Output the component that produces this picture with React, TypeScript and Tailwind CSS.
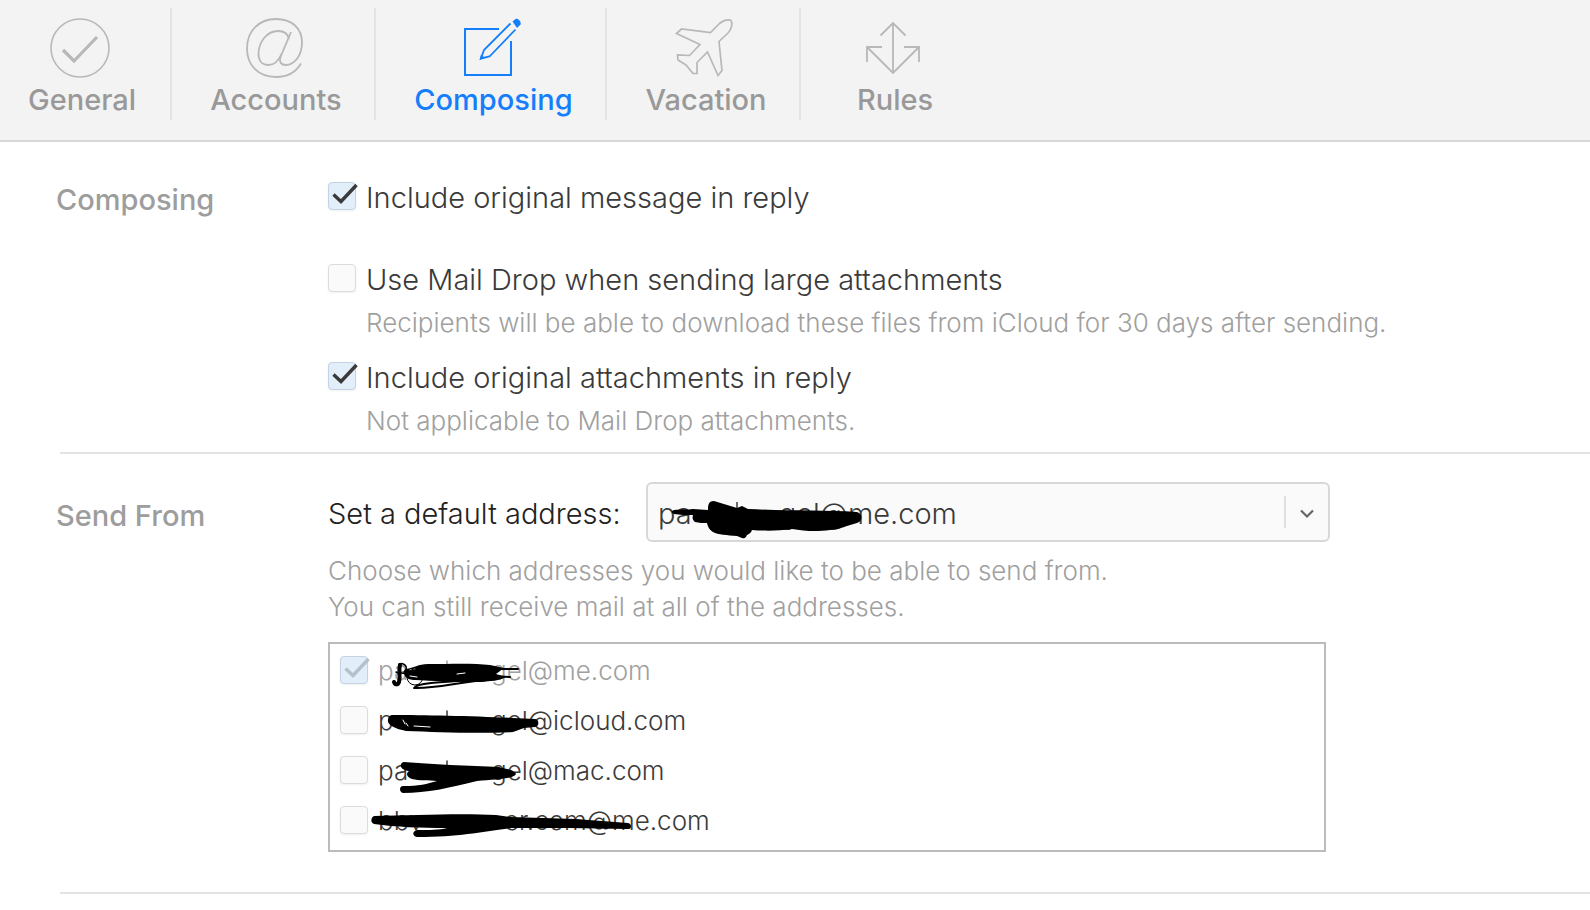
import React from 'react';

// Interfaces
interface Tab {
  id: string;
  label: string;
  width: string;
  icon: React.ReactNode;
}

interface Address {
  id: string;
  head: string;
  tail: string;
  gap: string;
  checked?: boolean;
  disabled?: boolean;
  ink: React.ReactNode;
}

interface CheckBoxProps {
  id: string;
  checked?: boolean;
  disabled?: boolean;
}

interface OptionProps extends CheckBoxProps {
  label: string;
  hint?: string;
}

// Toolbar icons
const GeneralIcon = () => (
  <svg className="w-[60px] h-[60px] mr-1" viewBox="0 0 60 60" fill="none" stroke="currentColor">
    <circle cx="30" cy="30" r="29" strokeWidth="1.6" />
    <path d="M13 32l11 11L47 19" strokeWidth="3.2" />
  </svg>
);

const AccountsIcon = () => (
  <svg className="w-[60px] h-[60px] mr-1" viewBox="0 0 60 60" fill="none" stroke="currentColor" strokeWidth="1.8">
    <path d="M57 45.500C52 54 43 59 32 59 14 59 3 47 3 30.500 3 13 15 1 32 1c16 0 26 9.500 26 23.500C58 38 50 47 42 47c-5 0-7-3-5.500-8L47 14" />
    <path d="M45 21c-1-5-5-8-11-8C23 13 14.500 24 14.500 36c0 7 4 11 10 11 6.500 0 10-4 13-11" />
  </svg>
);

const ComposingIcon = () => (
  <svg className="w-[60px] h-[60px] mr-1" viewBox="0 0 60 60" fill="none" stroke="currentColor" strokeWidth="2">
    <path d="M37 11H3v46h46V23" />
    <path d="M48.500 5.500L22 32l-3 8.500 8.500-2L53.500 11.500" strokeWidth="1.800" />
    <path d="M19 36.500l-1.500 5.500 5.500-1.800z" fill="currentColor" stroke="none" />
    <path d="M50.500 3.500l3-2.500c2-1 6 2 5 5.500L55 10z" fill="currentColor" stroke="none" />
  </svg>
);

const VacationIcon = () => (
  <svg className="w-[60px] h-[60px] mr-1" viewBox="0 0 60 60" fill="none" stroke="currentColor" strokeWidth="1.700">
    <path d="M2.500 15.500l5-4.500 29 3.500 9-9c4-3.500 9.500-4.500 11.500-3 2 3 .5 9-3 12.500l-9 8.500 3 29-4 5L33.500 34 23 44.500v11h-4l-7-8.500-8-5-.5-5 12 .5L26 26.500z" />
  </svg>
);

const RulesIcon = () => (
  <svg className="w-[60px] h-[60px] mr-1" viewBox="0 0 60 60" fill="none" stroke="currentColor" strokeWidth="1.800">
    <path d="M30 5v50M17.500 17.500L30 5l12.500 12.500M4 44V29h15M4 29l26 26 26-26M41 29h15v15" />
  </svg>
);

const tabs: Tab[] = [
  { id: 'general', label: 'General', width: 'w-[172px] pr-1.5', icon: <GeneralIcon /> },
  { id: 'accounts', label: 'Accounts', width: 'w-[204px] pl-1.5', icon: <AccountsIcon /> },
  { id: 'composing', label: 'Composing', width: 'w-[231px] pl-1.5', icon: <ComposingIcon /> },
  { id: 'vacation', label: 'Vacation', width: 'w-[194px] pl-1.5', icon: <VacationIcon /> },
  { id: 'rules', label: 'Rules', width: 'w-[188px]', icon: <RulesIcon /> },
];

const addresses: Address[] = [
  {
    id: 'me',
    head: 'pa',
    tail: 'gel@me.com',
    gap: 'w-[113px]',
    checked: true,
    disabled: true,
    ink: (
      <>
        <path d="M81 16v5" stroke="currentColor" strokeWidth="1.5" />
        <path d="M40 24c8-1 12-5 22-5 22 0 46-1 62 1l14 3-8 6 10 3c-6 4-16 4-25 5-24 0-50-1-66-2-8 0-14-5-9-11z" fill="black" stroke="none" />
        <path d="M44 25l5-1M44 31l7 1M91 29l8-1" stroke="white" strokeWidth="1" />
        <path d="M49 42c6-5 40-5 80-9M48 43c20 1 45-6 72-8" strokeWidth="2" />
        <circle cx="49" cy="32" r="8" strokeWidth="1" />
        <path d="M34 20c-2 8 1 10-1 17-1 3-4 3-5 0" strokeWidth="4" />
        <path d="M33 19c4-2 11 3 5 8M30 27c4 2 8 0 12 3" strokeWidth="1.5" />
        <path d="M124 24h28M122 31l22 1" strokeWidth="2" />
      </>
    ),
  },
  {
    id: 'icloud',
    head: 'p',
    tail: 'gel@icloud.com',
    gap: 'w-[113px]',
    ink: (
      <>
        <path d="M81 16v5" stroke="currentColor" strokeWidth="1.5" />
        <path d="M27 20c30 0 80 1 120 3l22 1c4 0 5 7 0 8l-11 1-11 4c-36 2-76 0-107-1-11-2-19-6-18-11 0-3 2-5 5-5z" fill="black" stroke="none" />
        <path d="M37 25l2 4M40 28l2 3M48 31l16 1" stroke="white" strokeWidth="1" />
      </>
    ),
  },
  {
    id: 'mac',
    head: 'pa',
    tail: 'gel@mac.com',
    gap: 'w-[113px]',
    ink: (
      <>
        <path d="M81 16v5" stroke="currentColor" strokeWidth="1.5" />
        <path d="M38 17c26 2 66 4 95 5 7 2 16 3 17 7-2 5-20 5-39 7-28 7-50 12-74 12-4-1-4-7 0-7 16 0 24-2 34-5-8-1-18 0-25-2-6-2-6-6-3-8-10-1-10-8-5-9z" fill="black" stroke="none" />
      </>
    ),
  },
  {
    id: 'other',
    head: 'bbv',
    tail: 'er.com@me.com',
    gap: 'w-[126px]',
    ink: (
      <path d="M8 21c40-1 90-3 122-1l14 2 66 2 52 4c4 1 4 6 0 6-40-1-80-1-116-1-32 4-52 9-95 9-5-1-5-6 0-7 12 0 22 0 30-2-26 0-51-1-73-4-4-1-3-7 0-8z" fill="black" stroke="none" />
    ),
  },
];

const CheckBox: React.FC<CheckBoxProps> = ({ id, checked, disabled }) => (
  <span className="relative w-7 h-7 shrink-0">
    <input
      id={id}
      type="checkbox"
      defaultChecked={checked}
      disabled={disabled}
      className="peer block appearance-none w-7 h-7 rounded border border-[#dcdcdc] bg-[#fafafa] shadow-sm shadow-black/5 checked:bg-[#e2eefa] checked:border-[#c3d3e4]"
    />
    <svg
      className="hidden peer-checked:block absolute top-0 left-0 w-[30px] h-7 text-[#3a3a3a] peer-disabled:text-[#b4c0cc] pointer-events-none"
      viewBox="0 0 30 28"
      fill="none"
      stroke="currentColor"
      strokeWidth="3.4"
    >
      <path d="M5.500 12.500l7.500 7L28.500 3" />
    </svg>
  </span>
);

const Option: React.FC<OptionProps> = ({ id, label, hint, checked }) => (
  <div>
    <div className="flex items-start gap-[10px]">
      <CheckBox id={id} checked={checked} />
      <label htmlFor={id} className="text-[29px] leading-8 font-light text-[#3a3a3a]">{label}</label>
    </div>
    {hint && <p className="mt-[9px] pl-[38px] text-[26px] leading-9 font-light text-[#a0a0a0]">{hint}</p>}
  </div>
);

const App: React.FC = () => {
  const currentTab = 'composing';

  return (
    <div className="min-h-screen bg-white font-['Inter',sans-serif]">
      <nav className="flex items-start h-[142px] pt-2 bg-[#f3f3f3] border-b-2 border-[#d8d8d8]">
        {tabs.map((tab) => (
          <button
            key={tab.id}
            type="button"
            className={`flex flex-col items-center h-28 pt-[10px] border-[#e3e3e3] not-last:border-r-2 ${tab.width} ${
              currentTab === tab.id ? 'text-[#147efb]' : 'text-[#b8b8b8]'
            }`}
          >
            {tab.icon}
            <span
              className={`mt-1 text-[29px] leading-9 font-medium ${
                currentTab === tab.id ? 'text-[#147efb]' : 'text-[#999999]'
              }`}
            >
              {tab.label}
            </span>
          </button>
        ))}
      </nav>

      <main>
        <section className="grid grid-cols-[272px_1fr] pl-14 pt-10 pb-[13px]">
          <h2 className="text-[29px] leading-9 font-medium text-[#9d9d9d]">Composing</h2>
          <div>
            <Option id="include-message" label="Include original message in reply" checked />
            <div className="mt-[50px]">
              <Option
                id="mail-drop"
                label="Use Mail Drop when sending large attachments"
                hint="Recipients will be able to download these files from iCloud for 30 days after sending."
              />
            </div>
            <div className="mt-[21px]">
              <Option
                id="include-attachments"
                label="Include original attachments in reply"
                hint="Not applicable to Mail Drop attachments."
                checked
              />
            </div>
          </div>
        </section>

        <hr className="ml-[60px] border-t-2 border-[#e3e3e3]" />

        <section className="grid grid-cols-[272px_1fr] pl-14 pt-7 pb-10">
          <h2 className="pt-4 text-[29px] leading-9 font-medium text-[#9d9d9d]">Send From</h2>
          <div>
            <div className="flex items-center h-[60px]">
              <label htmlFor="default-address" className="w-[318px] shrink-0 pt-1 text-[29px] leading-8 font-light text-[#222222]">
                Set a default address:
              </label>
              <div className="relative w-full max-w-[684px]">
                <select
                  id="default-address"
                  className="block appearance-none w-full h-[60px] pt-1 pl-[10px] rounded-md border-2 border-[#d8d8d8] bg-[#fafafa] text-[29px] font-light text-[#3a3a3a]"
                >
                  <option>{'pa\u2003\u2003\u2003gel@me.com'}</option>
                </select>
                <span className="absolute right-[44px] top-[14px] h-8 w-[2px] bg-[#e0e0e0]" />
                <svg className="absolute right-4 top-[27px] w-[14px] h-[10px] pointer-events-none" viewBox="0 0 14 10" fill="none" stroke="#666666" strokeWidth="2.2">
                  <path d="M1 1.500l6 6 6-6" />
                </svg>
                <svg className="absolute left-0 top-0 w-[230px] h-[60px] pointer-events-none" viewBox="0 0 230 60">
                  <path d="M91 20v8" stroke="#3a3a3a" strokeWidth="1.5" />
                  <path d="M28 28c8-1 13 0 19-1l15 1c0-4 0-9 6-9l23 7 5-2 6 3c40 2 75 1 109 3 6 2 6 9 0 11-9 2-18 7-27 7-14 2-26 1-38-1-14 2-27 2-40 1-1 3-3 4-5 5-1 2-2 4-5 3l-5-2c-10-1-19-1-24-4-4-3-5-5-6-9-4 0-8 0-12-1-2-2-3-3-2-7-7 0-13 0-19-1-3-1-3-3 0-4z" />
                </svg>
              </div>
            </div>
            <p className="mt-[11px] text-[26px] leading-9 font-light text-[#a0a0a0]">
              Choose which addresses you would like to be able to send from.
              <br />
              You can still receive mail at all of the addresses.
            </p>
            <ul className="mt-[17px] w-full max-w-[998px] pl-[10px] pt-px pb-[5px] border-2 border-[#bbbbbb]">
              {addresses.map((address) => (
                <li key={address.id} className="flex items-center gap-[10px] h-[50px]">
                  <CheckBox id={address.id} checked={address.checked} disabled={address.disabled} />
                  <label
                    htmlFor={address.id}
                    className={`relative flex pt-0.5 text-[26px] leading-9 font-light ${
                      address.disabled ? 'text-[#a0a0a0]' : 'text-[#3a3a3a]'
                    }`}
                  >
                    <span className={address.gap}>{address.head}</span>
                    <span>{address.tail}</span>
                    <svg className="absolute -left-3 -top-1.5 w-[270px] h-[50px] pointer-events-none" viewBox="0 0 270 50" fill="none" stroke="black" strokeLinecap="round">
                      {address.ink}
                    </svg>
                  </label>
                </li>
              ))}
            </ul>
          </div>
        </section>

        <hr className="ml-[60px] border-t-2 border-[#e3e3e3]" />
      </main>
    </div>
  );
};

export default App;
